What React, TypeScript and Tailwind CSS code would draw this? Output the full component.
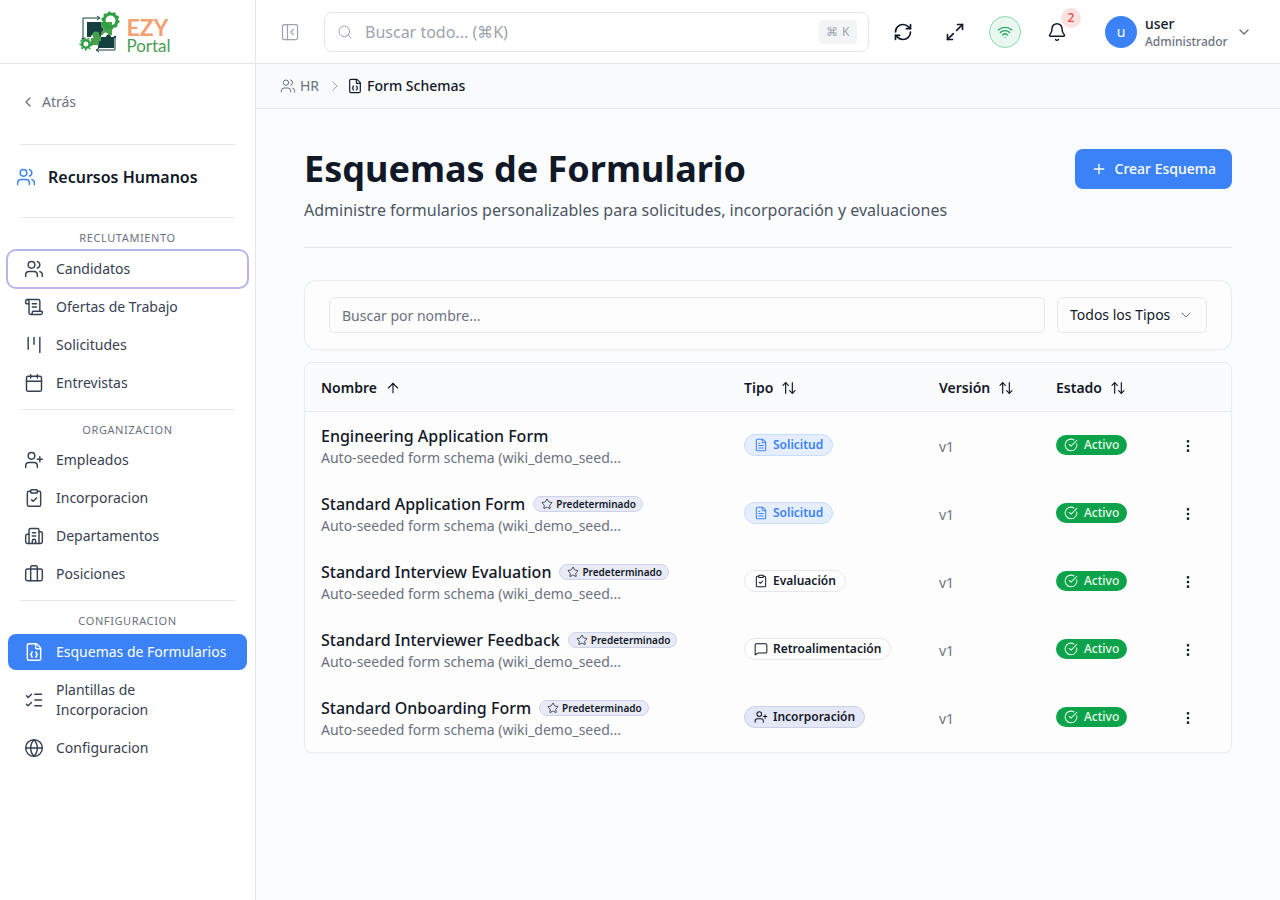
import type { ReactNode } from "react"
import {
  ArrowUp, ArrowUpDown, Bell, Briefcase, Building2, Calendar, ChevronDown, ChevronLeft, ChevronRight,
  CircleCheckBig, ClipboardCheck, EllipsisVertical, FileBraces, FileText, Globe, Kanban, ListChecks,
  Maximize2, MessageSquare, PanelLeftClose, Plus, RefreshCw, ScrollText, Search, Star, UserPlus, Users, Wifi,
} from "lucide-react"

const sections = [
  {
    label: "RECLUTAMIENTO",
    items: [
      { name: "Candidatos", icon: Users, focus: true },
      { name: "Ofertas de Trabajo", icon: ScrollText },
      { name: "Solicitudes", icon: Kanban },
      { name: "Entrevistas", icon: Calendar },
    ],
  },
  {
    label: "ORGANIZACION",
    items: [
      { name: "Empleados", icon: UserPlus },
      { name: "Incorporacion", icon: ClipboardCheck },
      { name: "Departamentos", icon: Building2 },
      { name: "Posiciones", icon: Briefcase },
    ],
  },
  {
    label: "CONFIGURACION",
    items: [
      { name: "Esquemas de Formularios", icon: FileBraces, active: true },
      { name: "Plantillas de Incorporacion", icon: ListChecks },
      { name: "Configuracion", icon: Globe },
    ],
  },
]

const TYPES = {
  solicitud: { label: "Solicitud", icon: FileText, cls: "bg-[#e4eefe] border-[#c9dcfb] text-[#3b82f6]" },
  evaluacion: { label: "Evaluación", icon: ClipboardCheck, cls: "bg-white border-[#e5e7eb] text-[#111827]" },
  feedback: { label: "Retroalimentación", icon: MessageSquare, cls: "bg-white border-[#e5e7eb] text-[#111827]" },
  onboarding: { label: "Incorporación", icon: UserPlus, cls: "bg-[#e4e7f6] border-[#cbd0e6] text-[#111827]" },
}

const rows: { name: string; type: keyof typeof TYPES; isDefault?: boolean }[] = [
  { name: "Engineering Application Form", type: "solicitud" },
  { name: "Standard Application Form", type: "solicitud", isDefault: true },
  { name: "Standard Interview Evaluation", type: "evaluacion", isDefault: true },
  { name: "Standard Interviewer Feedback", type: "feedback", isDefault: true },
  { name: "Standard Onboarding Form", type: "onboarding", isDefault: true },
]

function Logo() {
  return (
    <div className="mr-[5px] flex items-center gap-[5px]">
      <svg width="42" height="42" viewBox="80 11 42 42" fill="none">
        {/* frame arrows */}
        <path d="M84 37V18h16" stroke="#14413f" strokeWidth="1" />
        <path d="M98 16l3 2-3 2" stroke="#14413f" strokeWidth="1" />
        <path d="M116 38v12H98" stroke="#14413f" strokeWidth="1" />
        <path d="M100 48l-3 2 3 2" stroke="#14413f" strokeWidth="1" />
        <circle cx="84" cy="38.5" r="1.2" fill="#14413f" />
        <circle cx="116" cy="37" r="1.2" fill="#14413f" />
        {/* puzzle pieces */}
        <path d="M88 22h14v5a2.5 2.5 0 0 1 0 5v5h-5a2.5 2.5 0 0 0-5 0h-4z" fill="#14413f" />
        <path d="M102 37h5a2.5 2.5 0 0 1 5 0h3v11H99V41h3z" fill="#14413f" />
        <path d="M102 22h11v13h-4a2.5 2.5 0 0 0-5 0h-2v-3a2.5 2.5 0 0 0 0-5z" fill="#46a04c" />
        <path d="M92 38h5a2.5 2.5 0 0 1 5 0v3h-2v4h-8z" fill="#46a04c" />
        <circle cx="97" cy="35" r="3.5" fill="#46a04c" />
        {/* gears */}
        <circle cx="111.5" cy="20.5" r="6.5" stroke="#2f9e44" strokeWidth="3" />
        <circle cx="111.5" cy="20.5" r="8.3" stroke="#2f9e44" strokeWidth="1.6" strokeDasharray="2.6 2.6" />
        <circle cx="87" cy="44" r="3.8" stroke="#2f9e44" strokeWidth="2.6" />
        <circle cx="87" cy="44" r="5.8" stroke="#2f9e44" strokeWidth="1.4" strokeDasharray="2 2.05" />
      </svg>
      <div className="flex flex-col pt-[7px] font-['Lato',sans-serif]">
        <span className="h-[20px] text-[23px] font-bold leading-[20px] text-[#f4a070]">EZY</span>
        <span className="h-[17px] text-[17px] leading-[17px] text-[#4a9d4f]">Portal</span>
      </div>
    </div>
  )
}

function NavItem({ name, icon: Icon, active, focus }: { name: string; icon: typeof Users; active?: boolean; focus?: boolean }) {
  let cls = "text-[#374151]"
  if (active) cls = "bg-[#3b82f6] text-white"
  if (focus) cls = "text-[#374151] ring-2 ring-[#b8b5ea]"
  return (
    <a className={`flex items-center gap-[12px] rounded-lg px-4 py-2 text-sm leading-5 ${cls}`}>
      <Icon size={20} strokeWidth={1.75} className="shrink-0" />
      <span>{name}</span>
    </a>
  )
}

function Sidebar() {
  return (
    <aside className="flex w-64 shrink-0 flex-col border-r border-[#e5e7eb] bg-white">
      <div className="flex h-16 items-center justify-center border-b border-[#e5e7eb]">
        <Logo />
      </div>
      <div className="flex h-[76px] items-center gap-[6px] px-5 text-sm text-[#6b7280]">
        <ChevronLeft size={16} />
        <span>Atrás</span>
      </div>
      <div className="mx-5 mt-[4px] flex h-[74px] items-center gap-3 border-y border-[#e5e7eb] pb-[8px] text-[#111827]">
        <Users size={20} strokeWidth={1.75} className="ml-[-4px] text-[#3b82f6]" />
        <span className="text-base font-semibold">Recursos Humanos</span>
      </div>
      <div className="mt-3 flex flex-col gap-[2px] px-2">
        {sections.map((s, i) => (
          <div key={s.label} className="flex flex-col gap-[2px]">
            {i > 0 && <div className="mx-3 mb-[3px] mt-[6px] h-px bg-[#e5e7eb]" />}
            <div className={`mb-[2px] text-center text-[11px] leading-[16.5px] tracking-[0.6px] text-[#6b7280] ${i > 0 ? "mt-[7px]" : ""}`}>{s.label}</div>
            {s.items.map(it => (
              <NavItem key={it.name} {...it} />
            ))}
          </div>
        ))}
      </div>
    </aside>
  )
}

function TopBar() {
  return (
    <header className="flex h-16 items-center border-b border-[#e5e7eb] bg-white pl-6 pr-6">
      <PanelLeftClose size={20} strokeWidth={1.5} className="text-[#9ca3af]" />
      <div className="ml-[24px] flex h-10 w-[545px] items-center rounded-lg border border-[#e5e7eb] pl-3 pr-[11px]">
        <Search size={16} strokeWidth={1.5} className="text-[#9ca3af]" />
        <span className="ml-[12px] flex-1 text-base text-[#9ca3af]">Buscar todo... (⌘K)</span>
        <span className="rounded bg-[#f3f4f6] px-[7px] py-1 text-xs tracking-[0.5px] text-[#9ca3af]">⌘ K</span>
      </div>
      <RefreshCw size={20} strokeWidth={2} className="ml-[24px] text-[#111827]" />
      <Maximize2 size={20} strokeWidth={2} className="ml-[32px] text-[#111827]" />
      <div className="ml-[24px] flex h-8 w-8 items-center justify-center rounded-full border border-[#86d9ac] bg-[#e9f9f0]">
        <Wifi size={16} className="text-[#22a565]" />
      </div>
      <div className="relative ml-[26px]">
        <Bell size={20} strokeWidth={1.75} className="text-[#111827]" />
        <span className="absolute left-[14px] top-[-14px] flex h-5 w-5 items-center justify-center rounded-full bg-[#fee2e2] text-xs font-medium text-[#ef4444]">2</span>
      </div>
      <div className="ml-[38px] flex h-8 w-8 items-center justify-center rounded-full bg-[#3b82f6] text-sm text-white">u</div>
      <div className="ml-2 flex flex-col pt-[2px]">
        <span className="text-sm font-medium leading-[18px] text-[#111827]">user</span>
        <span className="text-xs font-medium leading-[17px] text-[#6b7280]">Administrador</span>
      </div>
      <ChevronDown size={16} className="ml-[8px] text-[#6b7280]" />
    </header>
  )
}

function Th({ children, sorted, className }: { children: ReactNode; sorted?: boolean; className: string }) {
  const Icon = sorted ? ArrowUp : ArrowUpDown
  return (
    <div className={`flex items-center gap-[8px] pt-[2px] text-sm font-semibold text-[#111827] ${className}`}>
      {children}
      <Icon size={16} strokeWidth={1.75} />
    </div>
  )
}

function Row({ name, type, isDefault }: (typeof rows)[number]) {
  const t = TYPES[type]
  const TypeIcon = t.icon
  return (
    <div className="flex h-[68px] items-center">
      <div className="w-[423px] pl-4">
        <div className="flex items-center gap-2">
          <span className="text-base font-medium leading-6 text-[#111827]">{name}</span>
          {isDefault && (
            <span className="flex h-4 items-center gap-[3px] rounded-full border border-[#cdd3ea] bg-[#e8eaf6] pl-[7px] pr-[6px] text-[10px] font-semibold text-[#111827]">
              <Star size={12} strokeWidth={1.5} />
              Predeterminado
            </span>
          )}
        </div>
        <div className="text-sm leading-5 text-[#6b7280]">Auto-seeded form schema (wiki_demo_seed...</div>
      </div>
      <div className="w-[195px] pl-4">
        <span className={`mb-[2px] inline-flex h-[22px] items-center gap-[5px] rounded-full border px-[9px] text-xs font-semibold ${t.cls}`}>
          <TypeIcon size={14} strokeWidth={1.75} />
          {t.label}
        </span>
      </div>
      <div className="w-[117px] pl-4 pt-[2px] text-sm text-[#6b7280]">v1</div>
      <div className="w-[117px] pl-4">
        <span className="mb-[2px] inline-flex h-5 items-center gap-[6px] rounded-full bg-[#0ca34a] px-2 text-xs font-medium text-[#e8f8ee]">
          <CircleCheckBig size={14} strokeWidth={1.75} />
          Activo
        </span>
      </div>
      <EllipsisVertical size={16} strokeWidth={2} className="ml-[23px] text-[#111827]" />
    </div>
  )
}

export default function App() {
  return (
    <div className="flex h-[900px] w-[1280px] overflow-hidden bg-[#fbfcfe] font-['Noto_Sans',sans-serif]">
      <Sidebar />
      <div className="flex min-w-0 flex-1 flex-col">
        <TopBar />
        <nav className="flex h-[45px] items-center gap-[4px] border-b border-[#e5e7eb] bg-[#f8fafc] pl-6 text-sm">
          <Users size={16} strokeWidth={1.5} className="text-[#6b7280]" />
          <span className="text-[#6b7280]">HR</span>
          <ChevronRight size={16} strokeWidth={1.5} className="ml-[4px] text-[#9ca3af]" />
          <FileBraces size={16} strokeWidth={1.75} className="text-[#111827]" />
          <span className="font-medium text-[#111827]">Form Schemas</span>
        </nav>
        <main className="flex flex-col px-12 pt-10">
          <div className="flex items-start justify-between border-b border-[#e5e7eb] pb-[25px]">
            <div>
              <h1 className="text-[36px] font-bold leading-10 text-[#111827]">Esquemas de Formulario</h1>
              <p className="mt-[9px] text-base leading-6 text-[#4b5563]">Administre formularios personalizables para solicitudes, incorporación y evaluaciones</p>
            </div>
            <button className="flex h-10 items-center gap-2 rounded-lg bg-[#3b82f6] px-4 text-sm font-medium text-white">
              <Plus size={16} />
              Crear Esquema
            </button>
          </div>
          <div className="mt-8 flex h-[70px] items-center gap-3 rounded-xl border border-[#e9ebef] bg-[#fdfdfe] px-6 shadow-[0_1px_2px_rgba(0,0,0,0.03)]">
            <div className="flex h-9 flex-1 items-center rounded-md border border-[#e5e7eb] px-3 pt-[2px] text-sm text-[#6b7280]">Buscar por nombre...</div>
            <div className="flex h-9 w-[150px] items-center justify-between rounded-md border border-[#e5e7eb] px-3 text-sm text-[#111827]">
              Todos los Tipos
              <ChevronDown size={16} strokeWidth={1.5} className="text-[#6b7280]" />
            </div>
          </div>
          <div className="mt-3 rounded-lg border border-[#e9ebef] bg-[#fdfdfe] shadow-[0_1px_2px_rgba(0,0,0,0.03)]">
            <div className="flex h-[49px] items-center rounded-t-lg border-b border-[#e9ebef] bg-[#fafbfd]">
              <Th sorted className="w-[423px] pl-4">Nombre</Th>
              <Th className="w-[195px] pl-4">Tipo</Th>
              <Th className="w-[117px] pl-4">Versión</Th>
              <Th className="w-[117px] pl-4">Estado</Th>
            </div>
            {rows.map(r => (
              <Row key={r.name} {...r} />
            ))}
          </div>
        </main>
      </div>
    </div>
  )
}
